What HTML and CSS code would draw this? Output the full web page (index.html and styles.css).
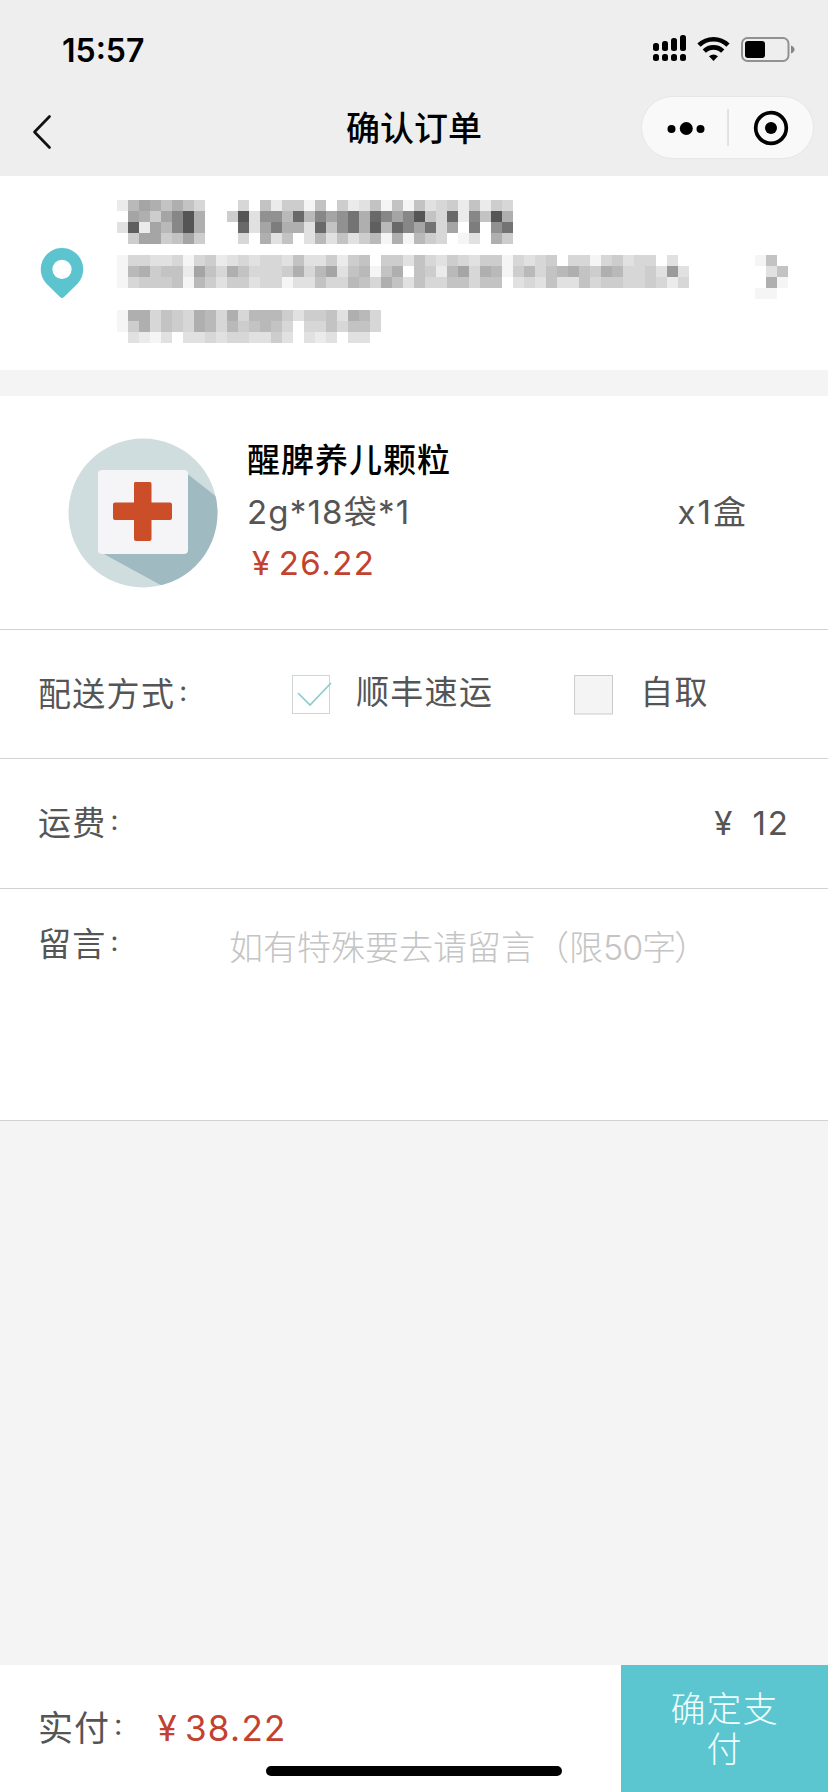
FILE: index.html
```html
<!DOCTYPE html>
<html lang="zh-CN">
<head>
<meta charset="utf-8">
<title>确认订单</title>
<link rel="stylesheet" href="styles.css">
</head>
<body>
<div class="page">
  <header class="header">
    <div class="status">
      <span class="clock">15:57</span>
      <svg class="status-icons" width="144" height="32" viewBox="0 0 144 32">
        <g fill="#000">
          <rect x="1" y="9" width="6" height="8" rx="2.5"/><rect x="10" y="7" width="6" height="10" rx="2.5"/>
          <rect x="19" y="4" width="6" height="13" rx="2.5"/><rect x="28" y="1" width="6" height="16" rx="2.5"/>
          <rect x="1" y="20" width="6" height="7" rx="2.5"/><rect x="10" y="20" width="6" height="7" rx="2.5"/>
          <rect x="19" y="20" width="6" height="7" rx="2.5"/><rect x="28" y="20" width="6" height="7" rx="2.5"/>
        </g>
        <g fill="none" stroke="#000" stroke-width="4.6">
          <path d="M47 11.2A20.5 20.5 0 0 1 76 11.2"/>
          <path d="M52.3 17.2A13 13 0 0 1 70.7 17.2"/>
        </g>
        <path d="M57 22.3Q61.500 18.900 66 22.300L61.500 27Z"/>
        <rect x="90" y="4" width="46.500" height="23" rx="5.500" fill="none" stroke="#919191" stroke-width="2"/>
        <rect x="93" y="7" width="20" height="17" rx="3"/>
        <path d="M139 11.500Q142.500 13 142.500 15.500T139 19.500Z" fill="#858585"/>
      </svg>
    </div>
    <div class="nav">
      <svg class="back" width="20" height="36" viewBox="0 0 20 36"><path d="M17.500 2.500L2.500 18L17.500 33.500" fill="none" stroke="#111" stroke-width="2.700" stroke-linecap="round" stroke-linejoin="round"/></svg>
      <h1 class="title">确认订单</h1>
      <div class="capsule">
        <svg width="172" height="62" viewBox="0 0 172 62">
          <circle cx="29.500" cy="32" r="4"/><circle cx="44.300" cy="31.500" r="6.500"/><circle cx="58.500" cy="32" r="4"/>
          <path d="M86 12V49" stroke="#ccc" stroke-width="1"/>
          <circle cx="129" cy="31" r="15.300" fill="none" stroke="#000" stroke-width="3.700"/><circle cx="129" cy="31" r="6"/>
        </svg>
      </div>
    </div>
  </header>

  <section class="address">
    <svg class="pin" width="44" height="52" viewBox="0 0 44 52">
      <path fill-rule="evenodd" fill="#5bc4ce" d="M22 1A21.200 21.200 0 0 1 37.500 36.700L24 50Q22 52 20 50L6.500 36.700A21.200 21.200 0 0 1 22 1ZM22 12.800a9.600 9.600 0 1 0 0 19.200a9.600 9.600 0 1 0 0 -19.200Z"/>
    </svg>
    <svg class="mosaic" width="693" height="143" viewBox="0 0 693 143"></svg>
  </section>

  <section class="product">
    <svg class="thumb" width="150" height="150" viewBox="0 0 150 150">
      <defs><clipPath id="disc"><circle cx="75" cy="75" r="74.500"/></clipPath></defs>
      <g clip-path="url(#disc)">
        <rect width="150" height="150" fill="#cfdddf"/>
        <path d="M117 34L150 60V150H98L34 115Z" fill="#9fbbc1"/>
      </g>
      <rect x="30" y="32" width="90" height="84" rx="4" fill="#f5f5f7"/>
      <path d="M67 44H82Q83.500 44 83.500 46V64.500H102Q104 64.500 104 66.500V80Q104 82 102 82H83.500V101Q83.500 103 81.500 103H68Q66 103 66 101V82H47Q45 82 45 80V66.500Q45 64.500 47 64.500H66V46Q66 44 67 44Z" fill="#cc4e29"/>
    </svg>
    <div class="info">
      <div class="name">醒脾养儿颗粒</div>
      <div class="spec">2g*18袋*1</div>
      <div class="price"><span class="yen">¥</span>26.22</div>
    </div>
    <div class="count">x1盒</div>
  </section>

  <section class="row delivery">
    <span class="label">配送方式<span class="colon">:</span></span>
    <label class="option">
      <svg class="box" width="42" height="42" viewBox="0 0 42 42"><rect x="1.500" y="2.500" width="37" height="38" fill="#fff" stroke="#cfd6d6"/><path d="M7 20L19 32L40 10" fill="none" stroke="#8accca" stroke-width="1.600"/></svg>
      <span class="option-text">顺丰速运</span>
    </label>
    <label class="option pickup">
      <svg class="box" width="42" height="42" viewBox="0 0 42 42"><rect x="1.500" y="2.500" width="38" height="38.500" fill="#f4f4f4" stroke="#ccc"/></svg>
      <span class="option-text">自取</span>
    </label>
  </section>

  <section class="row fee">
    <span class="label">运费<span class="colon">:</span></span>
    <span class="amount"><span class="yen">¥</span>12</span>
  </section>

  <section class="row message">
    <span class="label">留言<span class="colon">:</span></span>
    <span class="placeholder">如有特殊要去请留言（限<span class="limit">50</span>字<span class="paren">）</span></span>
  </section>

  <footer class="footer">
    <div class="total"><span class="label">实付<span class="colon">:</span></span><span class="sum"><span class="yen">¥</span>38.22</span></div>
    <div class="pay">确定支<br>付</div>
    <div class="home-bar"></div>
  </footer>
</div>
<script src="mosaic.js"></script>
</body>
</html>
```
FILE: styles.css
```css
* { box-sizing: border-box; }
body { margin: 0; background: #f4f4f4; font-family: Inter, "Noto Sans CJK SC", sans-serif; color: #555; font-size: 32px; }
svg { display: block; flex: none; }
.page { width: 828px; height: 1792px; display: flex; flex-direction: column; overflow: hidden; }

.header { height: 176px; background: #eee; color: #000; }
.status { height: 96px; padding: 34px 32px 0 62px; display: flex; justify-content: space-between; align-items: flex-start; }
.clock { font-size: 32px; font-weight: 600; line-height: 33px; }
.nav { height: 64px; display: grid; grid-template-columns: 187px 1fr 187px; align-items: start; }
.back { margin: 18px 0 0 32px; }
.title { margin: 0; font-size: 34px; font-weight: 500; line-height: 66px; text-align: center; }
.capsule { width: 173px; height: 63px; border-radius: 32px; background: #f9f9f9; border: 1px solid #e6e6e6; }

.address { height: 194px; background: #fff; display: flex; }
.pin { margin: 71px 0 0 40px; }
.mosaic { margin: 24px 0 0 33px; }

.product { margin-top: 26px; height: 234px; background: #fff; border-bottom: 1px solid #d2d2d2; display: flex; align-items: flex-start; padding: 0 80px 0 68px; }
.thumb { margin-top: 42px; }
.info { margin: 38px 0 0 29px; line-height: 52px; white-space: nowrap; }
.name { font-size: 33px; font-weight: 500; letter-spacing: 1px; color: #000; }
.spec { font-size: 33px; letter-spacing: 1.200px; }
.price { color: #c3412f; font-size: 33px; line-height: 50px; letter-spacing: 1.500px; }
.count { margin: 90px 0 0 auto; font-size: 33px; line-height: 52px; letter-spacing: 2px; }

.row { background: #fff; border-bottom: 1px solid #d2d2d2; display: flex; padding: 0 38px; font-size: 33px; letter-spacing: 1.300px; }
.label { display: flex; }
.colon { margin: -3px 0 0 4px; font-size: 0.83em; }
.delivery { height: 129px; line-height: 128px; }
.delivery .label { width: 253px; }
.option { display: flex; align-items: center; gap: 23px; line-height: 124px; }
.option-text { margin-top: -4px; }
.pickup { margin-left: 80px; gap: 25px; }
.fee { height: 130px; line-height: 128px; justify-content: space-between; }
.amount { letter-spacing: 2px; }
.fee .yen { margin-right: 18px; }
.message { height: 232px; line-height: 50px; padding-top: 30px; }
.message .label { width: 191px; }
.placeholder { font-size: 34px; letter-spacing: 0; color: #c4c4c4; font-weight: 300; padding-top: 4px; }
.limit { letter-spacing: -1px; }
.paren { margin-left: -2px; }

.footer { margin-top: auto; height: 127px; background: #fff; display: flex; justify-content: space-between; position: relative; font-size: 35px; letter-spacing: 1px; }
.total { display: flex; padding-left: 38px; line-height: 126px; }
.sum { color: #c3412f; margin-left: 29px; letter-spacing: 1.300px; }
.pay { width: 207px; background: #5bc6cf; color: #effeff; text-align: center; line-height: 40px; padding-top: 24px; font-weight: 300; }
.price .yen, .sum .yen { margin: 0 7px 0 5px; }
.home-bar { position: absolute; left: 266px; top: 101px; width: 296px; height: 10px; border-radius: 5px; background: #000; }
```
FILE: mosaic.js
```js
// Masked contact details: one letter per 11px cell, a = white, each next letter 10 levels darker.
const rows = [
  [0, 0, 'chjigigeaaaeagcffbgafcdgbgbgdefcgcfe'],
  [0, 1, 'ajifjmriaafrdllhphmjloipmjmrgepcmgri'],
  [0, 2, 'dqcjhmriaaapdjniidpgloiqhpmjoejanalo'],
  [0, 3, 'afjjfgjfaaaeaidgadhdgdfhbibhfeabdaif'],
  [0, 5, 'beeddebefcdedeedgddfcfgaffdgedfedffbedefaeebefdeeada'],
  [0, 6, 'bhifggcjgeigeeefiehjdghbgiagfchjeihbfheghigfiheefdkd'],
  [0, 7, 'befffgbhfdffdeebddgeehgeigdgeeggeggadedgddgeffeefece'],
  [0, 10, 'biiegfeiheiehhhfdffgdihe'],
  [0, 11, 'bfiegfeihehfghgeaeegegge'],
  [0, 12, 'adcbdaddedeeddfdadcdadda'],
  [58, 5, 'bga'], [58, 6, 'adg'], [58, 7, 'aib'], [58, 8, 'bba']
];
const svg = document.querySelector('.mosaic');
for (const [x0, y, cells] of rows) {
  [...cells].forEach((c, i) => {
    const level = c.charCodeAt(0) - 97;
    if (!level) return;
    const v = 255 - level * 10;
    const r = document.createElementNS('http://www.w3.org/2000/svg', 'rect');
    r.setAttribute('x', (x0 + i) * 11);
    r.setAttribute('y', y * 11);
    r.setAttribute('width', 11);
    r.setAttribute('height', 11);
    r.setAttribute('fill', `rgb(${v},${v},${v})`);
    svg.appendChild(r);
  });
}
```
